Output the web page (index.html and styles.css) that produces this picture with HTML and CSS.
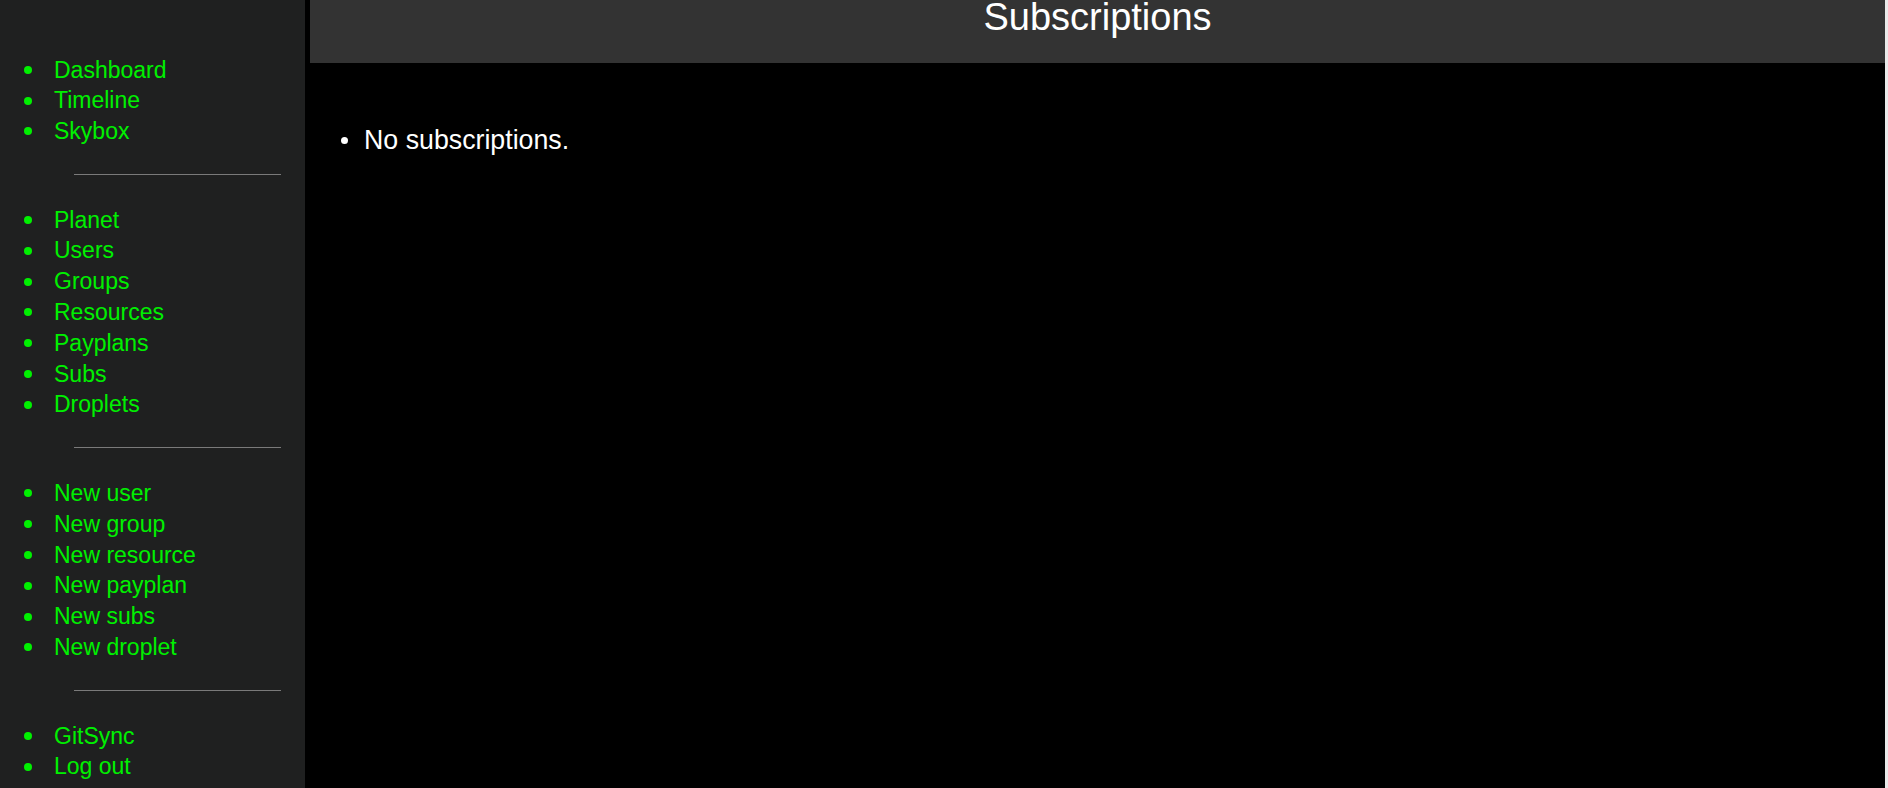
FILE: index.html
```html
<!DOCTYPE html>
<html>
<head>
<meta charset="utf-8">
<title>Subscriptions</title>
<link rel="stylesheet" href="styles.css">
</head>
<body>
<div class="layout">
  <nav class="sidebar">
    <ul class="nav-list">
      <li><a href="#">Dashboard</a></li>
      <li><a href="#">Timeline</a></li>
      <li><a href="#">Skybox</a></li>
    </ul>
    <hr class="nav-sep">
    <ul class="nav-list">
      <li><a href="#">Planet</a></li>
      <li><a href="#">Users</a></li>
      <li><a href="#">Groups</a></li>
      <li><a href="#">Resources</a></li>
      <li><a href="#">Payplans</a></li>
      <li><a href="#">Subs</a></li>
      <li><a href="#">Droplets</a></li>
    </ul>
    <hr class="nav-sep">
    <ul class="nav-list">
      <li><a href="#">New user</a></li>
      <li><a href="#">New group</a></li>
      <li><a href="#">New resource</a></li>
      <li><a href="#">New payplan</a></li>
      <li><a href="#">New subs</a></li>
      <li><a href="#">New droplet</a></li>
    </ul>
    <hr class="nav-sep">
    <ul class="nav-list">
      <li><a href="#">GitSync</a></li>
      <li><a href="#">Log out</a></li>
    </ul>
  </nav>
  <main class="main">
    <header class="page-header">
      <h1 class="page-title">Subscriptions</h1>
    </header>
    <ul class="content-list">
      <li>No subscriptions.</li>
    </ul>
  </main>
</div>
</body>
</html>
```

FILE: styles.css
```css
html, body {
  margin: 0;
  padding: 0;
  height: 100%;
  overflow: hidden;
  background: #000;
  font-family: "Liberation Sans", Arial, sans-serif;
}

.layout {
  display: flex;
  height: 788px;
  border-right: 3px solid #e9e9e9;
}

.sidebar {
  width: 305px;
  flex: 0 0 305px;
  background: #1f2020;
  padding-top: 54.5px;
  box-sizing: border-box;
}

.nav-list {
  list-style: none;
  margin: 0;
  padding: 0;
}

.nav-list li {
  display: flex;
  align-items: center;
  font-size: 23px;
  line-height: 30.8px;
}

.nav-list li::before {
  content: "";
  flex: 0 0 8px;
  width: 8px;
  height: 8px;
  border-radius: 50%;
  background: #00f000;
  margin-left: 24px;
  margin-right: 22px;
}

.nav-list a {
  color: #00f000;
  text-decoration: none;
}

.nav-sep {
  border: 0;
  border-top: 1px solid #7a7a7a;
  height: 0;
  width: 207px;
  margin: 27px 0 29.8px 74px;
}

.main {
  flex: 1;
  background: #000;
  display: flex;
  flex-direction: column;
}

.page-header {
  margin-left: 5px;
  height: 63px;
  background: #333333;
  display: flex;
  justify-content: center;
  align-items: flex-start;
}

.page-title {
  margin: 0;
  font-weight: normal;
  color: #fff;
  font-size: 38px;
  line-height: 34px;
}

.content-list {
  list-style: none;
  margin: 61.5px 0 0 0;
  padding: 0;
}

.content-list li {
  display: flex;
  align-items: center;
  color: #fff;
  font-size: 26.75px;
  line-height: 31px;
}

.content-list li::before {
  content: "";
  flex: 0 0 7px;
  width: 7px;
  height: 7px;
  border-radius: 50%;
  background: #fff;
  margin-left: 35.5px;
  margin-right: 16.5px;
}
```
